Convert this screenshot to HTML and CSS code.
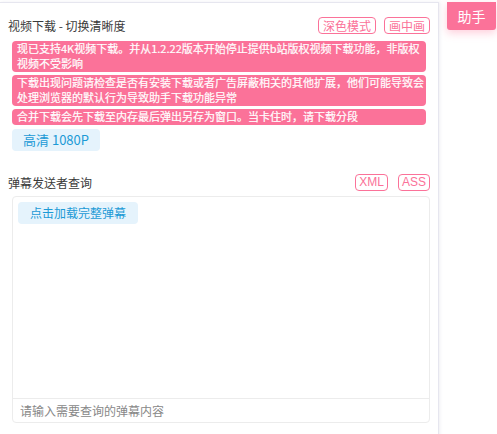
FILE: index.html
```html
<!DOCTYPE html>
<html lang="zh-CN">
<head>
    <meta charset="UTF-8">
    <meta name="viewport" content="width=device-width, initial-scale=1.0">
    <title>助手</title>
    <link rel="stylesheet" href="styles.css">
</head>
<body>
    <div class="panel">
        <div class="section">
            <div class="section-head">
                <span class="section-title">视频下载 - 切换清晰度</span>
                <div class="tags">
                    <span class="tag">深色模式</span>
                    <span class="tag">画中画</span>
                </div>
            </div>
            <div class="notices">
                <div class="notice">现已支持4K视频下载。并从1.2.22版本开始停止提供b站版权视频下载功能，非版权视频不受影响</div>
                <div class="notice">下载出现问题请检查是否有安装下载或者广告屏蔽相关的其他扩展，他们可能导致会处理浏览器的默认行为导致助手下载功能异常</div>
                <div class="notice">合并下载会先下载至内存最后弹出另存为窗口。当卡住时，请下载分段</div>
            </div>
            <div class="chips">
                <span class="chip chip-quality">高清 1080P</span>
            </div>
        </div>

        <div class="section section-danmaku">
            <div class="section-head">
                <span class="section-title">弹幕发送者查询</span>
                <div class="tags tags-wide">
                    <span class="tag">XML</span>
                    <span class="tag">ASS</span>
                </div>
            </div>
            <div class="danmaku-box">
                <div class="danmaku-list">
                    <span class="chip">点击加载完整弹幕</span>
                </div>
                <input class="danmaku-input" type="text" placeholder="请输入需要查询的弹幕内容">
            </div>
        </div>
    </div>
    <button class="helper-btn">助手</button>
</body>
</html>
```

FILE: styles.css
```css
body {
    margin: 0;
    font-family: "Noto Sans CJK SC", "Noto Sans", sans-serif;
    background: #fff;
    display: flex;
    align-items: flex-start;
    height: 434px;
    overflow: hidden;
}
.panel {
    width: 439px;
    height: 440px;
    margin-top: 2px;
    border-top: 1px solid #e6e6ef;
    border-right: 1px solid #e6e6ef;
    box-shadow: 1px 0 3px rgba(120, 120, 160, 0.12);
    box-sizing: border-box;
    padding: 0 8px 0 8px;
    flex-shrink: 0;
}
.section-head {
    display: flex;
    justify-content: space-between;
    align-items: center;
    margin-top: 14px;
    height: 17px;
}
.section-title {
    font-size: 12px;
    color: #3a3a3a;
}
.tags {
    display: flex;
    gap: 8px;
}
.tags-wide {
    gap: 10px;
}
.tag {
    font-size: 12px;
    line-height: 15px;
    color: #fb7299;
    border: 1px solid #fb7299;
    border-radius: 4px;
    padding: 0 4px;
}
.tags-wide .tag {
    font-family: "Liberation Sans", sans-serif;
    padding: 0 3px;
}
.notices {
    margin: 7px 4px 0 4px;
}
.notice {
    background: #fb7299;
    color: #fff;
    font-size: 11px;
    line-height: 15px;
    padding: 0 1px 1px 5px;
    border-radius: 4px;
    margin-bottom: 3px;
    -webkit-text-stroke: 0.2px #fff;
}
.chips {
    margin: 4px 0 0 4px;
    display: flex;
}
.chip {
    background: #e5f3fc;
    color: #1b9ad6;
    font-size: 12px;
    line-height: 22px;
    padding: 0 12px;
    border-radius: 4px;
}
.chip-quality {
    font-size: 13px;
    padding: 0 11px;
}
.section-danmaku .section-head {
    margin-top: 23px;
}
.danmaku-box {
    margin: 5px 0 0 4px;
    height: 227px;
    border: 1px solid #ececec;
    border-radius: 4px;
    box-sizing: border-box;
    display: flex;
    flex-direction: column;
}
.danmaku-list {
    flex: 1;
    padding: 5px;
    display: flex;
    align-items: flex-start;
}
.danmaku-input {
    border: none;
    border-top: 1px solid #ececec;
    height: 23px;
    padding: 0 7px;
    font-family: inherit;
    font-size: 12px;
    color: #333;
    background: transparent;
    outline: none;
}
.danmaku-input::placeholder {
    color: #888;
}
.helper-btn {
    margin: 2px 0 0 8px;
    width: 49px;
    height: 28px;
    border: none;
    border-radius: 0 0 3px 3px;
    background: #fb7299;
    color: #fff;
    font-family: inherit;
    font-size: 14px;
    box-shadow: 0 3px 8px rgba(251, 114, 153, 0.35);
    padding: 0;
}
```
